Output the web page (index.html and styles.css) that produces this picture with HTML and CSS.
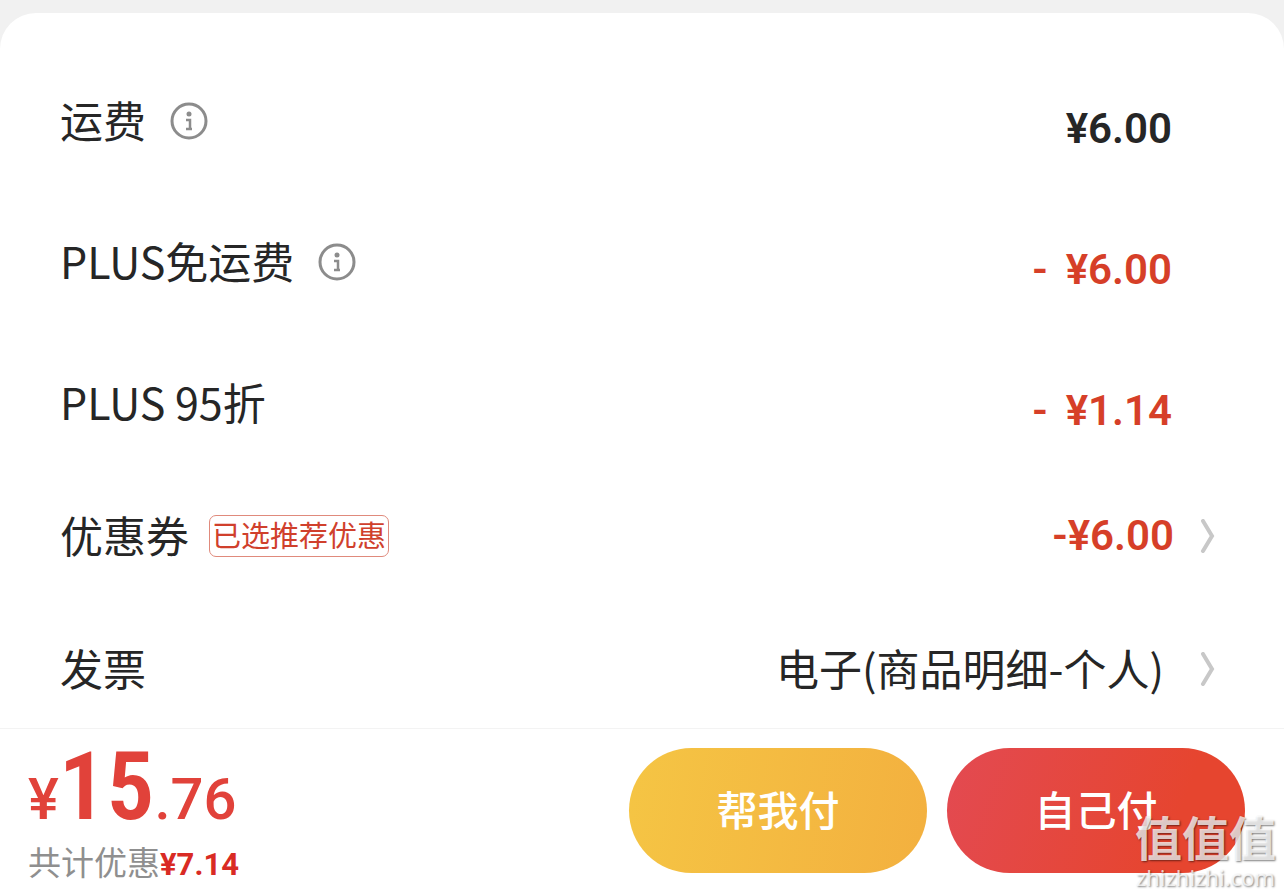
FILE: index.html
```
<!DOCTYPE html>
<html lang="zh-CN">
  <head>
    <meta charset="UTF-8" />
    <meta name="viewport" content="width=device-width, initial-scale=1.0" />
    <title>确认订单</title>
    <link rel="stylesheet" href="styles.css">
  </head>
  <body>
    <main class="card">
      <section class="fees">
        <div class="row">
          <span class="label">运费</span>
          <button class="info" type="button" aria-label="运费说明">
            <svg viewBox="0 0 44 44" width="44" height="44">
              <circle cx="22" cy="22" r="17" fill="none" stroke="#8c8c8c" stroke-width="3" />
              <circle cx="22" cy="15" r="2.5" fill="#8c8c8c" />
              <path d="M19 21h4v9M19 30h6" fill="none" stroke="#8c8c8c" stroke-width="2.5" />
            </svg>
          </button>
          <span class="price">¥6.00</span>
        </div>
        <div class="row">
          <span class="label">PLUS免运费</span>
          <button class="info" type="button" aria-label="PLUS免运费说明">
            <svg viewBox="0 0 44 44" width="44" height="44">
              <circle cx="22" cy="22" r="17" fill="none" stroke="#8c8c8c" stroke-width="3" />
              <circle cx="22" cy="15" r="2.5" fill="#8c8c8c" />
              <path d="M19 21h4v9M19 30h6" fill="none" stroke="#8c8c8c" stroke-width="2.5" />
            </svg>
          </button>
          <span class="price off"><span>-</span><span>¥6.00</span></span>
        </div>
        <div class="row">
          <span class="label">PLUS 95折</span>
          <span class="price off"><span>-</span><span>¥1.14</span></span>
        </div>
      </section>
      <a class="row link" href="#coupon">
        <span class="label">优惠券</span>
        <span class="tag">已选推荐优惠</span>
        <span class="price off">-¥6.00</span>
        <svg class="arrow" viewBox="0 0 16 34" width="16" height="34">
          <path d="M3 2l9 15L3 32" fill="none" stroke="#c8c8c8" stroke-width="4" stroke-linecap="round" />
        </svg>
      </a>
      <a class="row link" href="#invoice">
        <span class="label">发票</span>
        <span class="value">电子(商品明细-个人)</span>
        <svg class="arrow" viewBox="0 0 16 34" width="16" height="34">
          <path d="M3 2l9 15L3 32" fill="none" stroke="#c8c8c8" stroke-width="4" stroke-linecap="round" />
        </svg>
      </a>
    </main>
    <footer class="pay">
      <div class="total">
        <div class="amount">¥<strong>15</strong>.76</div>
        <div class="saved">共计优惠<b>¥7.14</b></div>
      </div>
      <button class="btn yellow" type="button">帮我付</button>
      <button class="btn red" type="button">自己付</button>
      <div class="watermark">
        <span class="mark">值值值</span>
        <span class="site">zhizhizhi.com</span>
      </div>
    </footer>
  </body>
</html>
```

FILE: styles.css
```
* {
  box-sizing: border-box;
}
body {
  margin: 0;
  padding-top: 13px;
  min-height: 100vh;
  display: flex;
  flex-direction: column;
  background-color: #f1f1f1;
  color: #262626;
  font-family: "Noto Sans CJK SC", sans-serif;
  font-size: 43px;
}
button {
  border: 0;
  padding: 0;
  font-family: inherit;
  cursor: pointer;
}
svg {
  display: block;
}

/* Lista de importes */
.card {
  flex: 1;
  display: flex;
  flex-direction: column;
  gap: 73px;
  padding: 78px 68px 29px 60px;
  background-color: #fff;
  border-radius: 36px 36px 0 0;
}
.fees {
  display: flex;
  flex-direction: column;
  gap: 81px;
  padding-right: 44px;
}
.row {
  display: flex;
  align-items: center;
  gap: 20px;
  height: 60px;
  line-height: 60px;
  white-space: nowrap;
}
.label,
.value {
  padding-bottom: 5px;
}
.link {
  color: inherit;
  text-decoration: none;
}
.info {
  margin-left: 1px;
  background: none;
}
.price {
  margin-left: auto;
  display: flex;
  gap: 18px;
  font-family: Roboto, sans-serif;
  font-size: 42px;
  font-weight: 600;
}
.fees .price {
  padding-top: 16px;
}
.off {
  color: #d63f28;
}
.value {
  margin-left: auto;
  margin-right: 10px;
}
.arrow {
  margin-left: 6px;
}
.tag {
  padding: 0 2px 3px;
  border: 1px solid #e08a7c;
  border-radius: 7px;
  color: #d0402c;
  font-size: 29px;
  line-height: 37px;
}

/* Barra de pago */
.pay {
  position: relative; /* para colocar la marca de agua */
  display: flex;
  align-items: center;
  gap: 20px;
  height: 167px;
  padding: 0 39px 3px 28px;
  background-color: #fff;
  border-top: 1px solid #f3f3f3;
}
.total {
  margin-right: auto;
  padding-top: 16px;
  white-space: nowrap;
}
.amount {
  color: #e1423a;
  font-family: Roboto, sans-serif;
  font-size: 58px;
  font-weight: 500;
  line-height: 76px;
}
.amount strong {
  font-family: "Roboto Condensed", Roboto, sans-serif;
  font-size: 95px;
  font-weight: 600;
}
.saved {
  color: #8f8f8f;
  font-size: 33px;
  line-height: 48px;
}
.saved b {
  color: #d92b24;
  font-family: Roboto, sans-serif;
  font-size: 31px;
}
.btn {
  width: 298px;
  height: 125px;
  padding-bottom: 6px;
  border-radius: 63px;
  color: #fff;
  font-size: 41px;
  font-weight: 500;
}
.yellow {
  background: linear-gradient(100deg, #f5c544, #f3b03f);
}
.red {
  background: linear-gradient(110deg, #e34a52, #e6452f 75%);
}
.watermark {
  position: absolute;
  right: 8px;
  bottom: 4px;
  display: flex;
  flex-direction: column;
  align-items: center;
  color: rgba(255, 255, 255, 0.75);
  text-shadow: 1px 1px 2px rgba(0, 0, 0, 0.5);
  pointer-events: none;
}
.mark {
  font-size: 47px;
  font-weight: 700;
  line-height: 54px;
}
.site {
  font-family: "Noto Sans", sans-serif;
  font-size: 22px;
  line-height: 28px;
}
```
